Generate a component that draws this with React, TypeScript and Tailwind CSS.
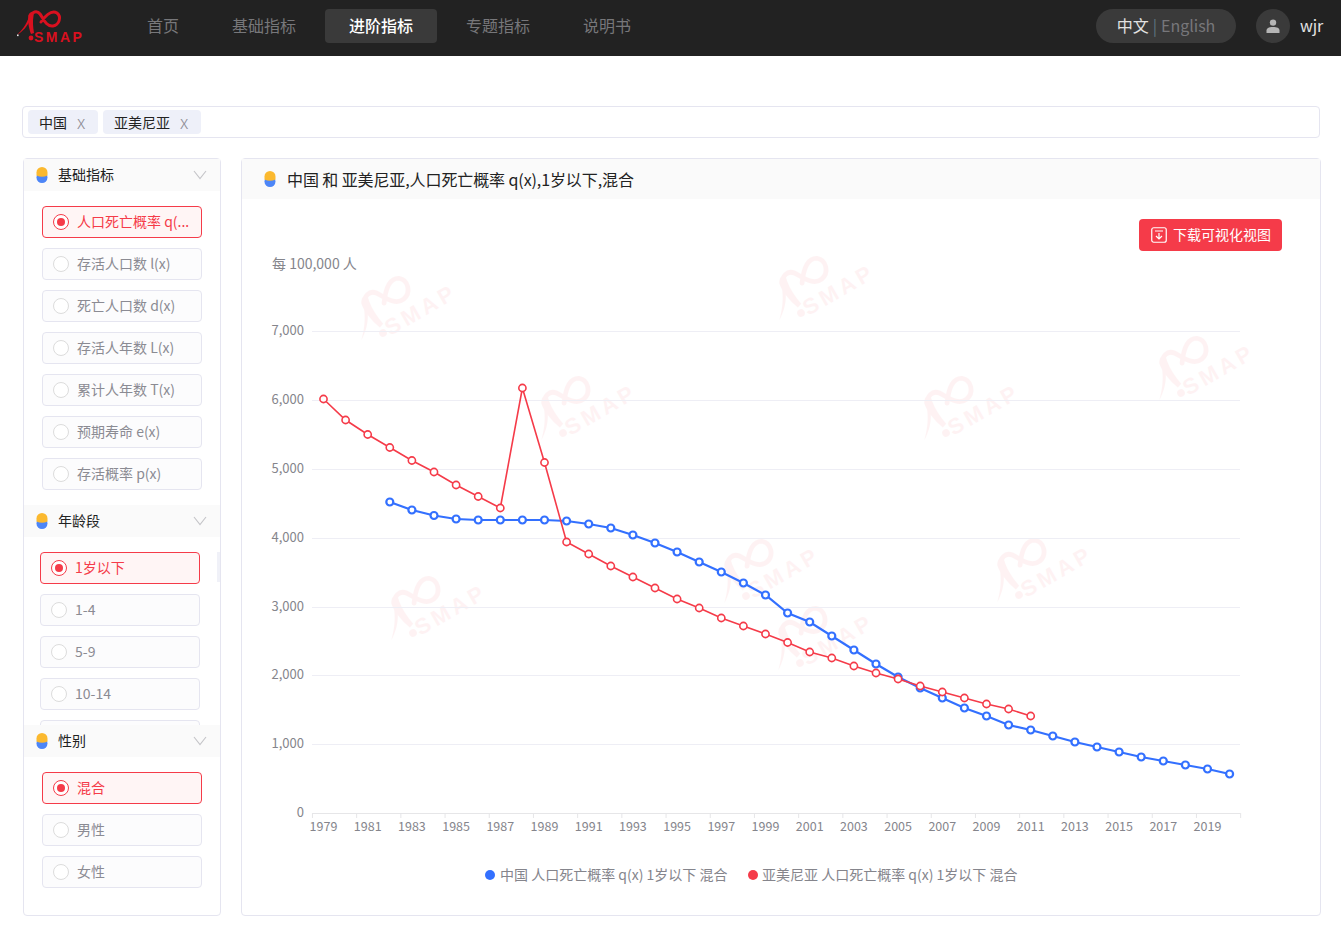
import { Fragment } from 'react';

const RED = '#f53b49';
const BLUE = '#3370ff';

const navItems = ['首页', '基础指标', '进阶指标', '专题指标', '说明书'];

const yTicks = [
    { label: '7,000', y: 331 },
    { label: '6,000', y: 400 },
    { label: '5,000', y: 469 },
    { label: '4,000', y: 538 },
    { label: '3,000', y: 607 },
    { label: '2,000', y: 675 },
    { label: '1,000', y: 744 },
    { label: '0', y: 813 },
];

// pixel heights read off the picture, one per year
const redStart = 1979;
const redSeries = [
    399, 420, 434.5, 447.5, 460.5, 472, 485, 496.5, 508, 388, 462.5, 542, 554, 566, 577, 588, 599, 608, 618, 626, 634,
    642.5, 652, 658, 666, 673, 679, 686, 692, 698, 704, 709, 716,
];
const blueStart = 1982;
const blueSeries = [
    502, 510, 515.5, 519, 520, 520, 520, 520, 521, 524, 528, 535, 543, 552, 562, 572, 583, 595, 613, 622, 636, 650, 664,
    677, 688, 698, 708, 716, 725, 730, 736, 742, 747, 752, 757, 761, 765, 769, 774,
];

const watermarks = [
    [383, 333],
    [563, 433],
    [801, 313],
    [946, 433],
    [1181, 393],
    [413, 633],
    [746, 596],
    [800, 663],
    [1019, 595],
];

const yearX = (year: number) => 323.5 + (year - 1979) * 22.1;

function LogoShape({ color }: { color: string }) {
    return (
        <g>
            <path d="M17 35 C22 30 26 25 29 17 L30 20 C27 27 23 31 17 35 Z" fill={color} />
            <path
                d="M30 16 C32 12 37 10 40 14 C43 18 46 27 53 26 C59 25 62 17 57 13 C52 10 46 15 41 22"
                fill="none"
                stroke={color}
                strokeWidth="3"
                strokeLinecap="round"
            />
            <path d="M28.5 15 C31 10 35 12 33.5 16 C32.5 21 33 27 34 33 L31 34 C28.5 27 27.5 20 28.5 15 Z" fill={color} />
            <circle cx="31" cy="38" r="2.4" fill={color} />
            <text
                x="34"
                y="42"
                fill={color}
                fontFamily="Liberation Sans, sans-serif"
                fontSize="14"
                fontWeight="700"
                letterSpacing="2.5"
            >
                SMAP
            </text>
        </g>
    );
}

function DotIcon() {
    return (
        <svg width="12" height="16" viewBox="0 0 12 16" className="shrink-0">
            <circle cx="6" cy="10.5" r="5.5" fill="#4d86f7" />
            <path d="M0.5 5.5 A5.5 5.5 0 0 1 11.5 5.5 L11.5 8.5 Q6 11 0.5 8.5 Z" fill="#fbb92f" />
        </svg>
    );
}

function SectionHeader({ title }: { title: string }) {
    return (
        <div className="flex h-8 items-center bg-[#fafafa] pl-3 pr-[13px]">
            <DotIcon />
            <span className="ml-[10px] flex-1 pb-[2px] text-sm text-[#222]">{title}</span>
            <svg width="14" height="10" viewBox="0 0 14 10">
                <polyline points="1,1 7,8.5 13,1" fill="none" stroke="#c4c4c8" strokeWidth="1.1" />
            </svg>
        </div>
    );
}

function RadioOption({ label, selected = false }: { label: string; selected?: boolean }) {
    return (
        <div
            className={
                selected
                    ? 'flex h-8 w-40 shrink-0 items-center rounded-sm border border-[#f53b49] bg-[#fff5f5] pl-[10px] text-sm text-[#f53b49]'
                    : 'flex h-8 w-40 shrink-0 items-center rounded-sm border border-[#e5e5f0] bg-[#fcfcfd] pl-[10px] text-sm text-[#8b8b93]'
            }
        >
            {selected ? (
                <span className="flex h-4 w-4 shrink-0 items-center justify-center rounded-full border border-[#f53b49] bg-white">
                    <span className="h-2 w-2 rounded-full bg-[#f53b49]" />
                </span>
            ) : (
                <span className="h-4 w-4 shrink-0 rounded-full border border-[#dcdcdc] bg-white" />
            )}
            <span className="ml-2 whitespace-nowrap pb-[3px]">{label}</span>
        </div>
    );
}

function Chart() {
    const ticks = [];
    for (let year = 1979; year <= 2021; year += 2) ticks.push(year);
    const labels = [];
    for (let year = 1979; year <= 2019; year += 2) labels.push(year);

    const redPoints = redSeries.map((y, i) => [yearX(redStart + i), y]);
    const bluePoints = blueSeries.map((y, i) => [yearX(blueStart + i), y]);

    return (
        <svg width="1078" height="664" viewBox="242 251 1078 664" className="block">
            {watermarks.map(([x, y]) => (
                <g key={`${x}-${y}`} transform={`translate(${x} ${y}) rotate(-30) scale(1.58) translate(-31 -38)`} opacity="0.06">
                    <LogoShape color={RED} />
                </g>
            ))}

            <text x="272" y="269" fontSize="14" fill="#85858c">
                每 100,000 人
            </text>

            {yTicks.map((tick) => (
                <Fragment key={tick.label}>
                    <line
                        x1="312"
                        x2="1240"
                        y1={tick.y + 0.5}
                        y2={tick.y + 0.5}
                        stroke={tick.label === '0' ? '#e6e6e8' : '#eeeef5'}
                    />
                    <text x="304" y={tick.y + 3.5} textAnchor="end" fontSize="13" fill="#85858c">
                        {tick.label}
                    </text>
                </Fragment>
            ))}

            {ticks.map((year) => (
                <line
                    key={year}
                    x1={yearX(year) - 11.05}
                    x2={yearX(year) - 11.05}
                    y1="813"
                    y2="818"
                    stroke="#e6e6e8"
                />
            ))}
            {labels.map((year) => (
                <text key={year} x={yearX(year)} y="831" textAnchor="middle" fontSize="12.5" fill="#85858c">
                    {year}
                </text>
            ))}

            <polyline points={bluePoints.join(' ')} fill="none" stroke={BLUE} strokeWidth="2.2" />
            {bluePoints.map(([x, y]) => (
                <circle key={x} cx={x} cy={y} r="3.5" fill="#fff" stroke={BLUE} strokeWidth="2.2" />
            ))}

            <polyline points={redPoints.join(' ')} fill="none" stroke={RED} strokeWidth="1.6" />
            {redPoints.map(([x, y]) => (
                <circle key={x} cx={x} cy={y} r="3.6" fill="#fff" stroke={RED} strokeWidth="1.6" />
            ))}

            <circle cx="490" cy="875" r="5" fill={BLUE} />
            <text x="500" y="880" fontSize="14" fill="#85858c">
                中国 人口死亡概率 q(x) 1岁以下 混合
            </text>
            <circle cx="753" cy="875" r="5" fill={RED} />
            <text x="762" y="880" fontSize="14" fill="#85858c">
                亚美尼亚 人口死亡概率 q(x) 1岁以下 混合
            </text>
        </svg>
    );
}

function Sidebar() {
    return (
        <aside className="flex h-[758px] w-[198px] shrink-0 flex-col rounded-sm border border-[#e5e5f0]">
            <SectionHeader title="基础指标" />
            <div className="flex flex-col gap-[10px] pb-[15px] pl-[18px] pt-[15px]">
                <RadioOption label="人口死亡概率 q(..." selected />
                <RadioOption label="存活人口数 l(x)" />
                <RadioOption label="死亡人口数 d(x)" />
                <RadioOption label="存活人年数 L(x)" />
                <RadioOption label="累计人年数 T(x)" />
                <RadioOption label="预期寿命 e(x)" />
                <RadioOption label="存活概率 p(x)" />
            </div>

            <SectionHeader title="年龄段" />
            <div className="relative flex h-[188px] flex-col gap-[10px] overflow-hidden pl-4 pt-[15px]">
                <RadioOption label="1岁以下" selected />
                <RadioOption label="1-4" />
                <RadioOption label="5-9" />
                <RadioOption label="10-14" />
                <RadioOption label="" />
                <div className="absolute right-0 top-[15px] h-[30px] w-[3px] bg-[#f0f1f8]" />
            </div>

            <SectionHeader title="性别" />
            <div className="flex flex-col gap-[10px] pl-[18px] pt-[15px]">
                <RadioOption label="混合" selected />
                <RadioOption label="男性" />
                <RadioOption label="女性" />
            </div>
        </aside>
    );
}

export default function App() {
    return (
        <div className="min-h-[946px] bg-white font-['Noto_Sans_CJK_SC',sans-serif]">
            <header className="flex h-14 items-start bg-[#222222] pt-[9px]">
                <svg width="110" height="56" viewBox="0 0 110 56" className="-mt-[9px] shrink-0">
                    <LogoShape color="#d9101f" />
                    <rect x="17" y="34.5" width="1.6" height="1.6" fill="#e8e8e8" />
                </svg>
                <nav className="ml-[13px] flex gap-[5px]">
                    {navItems.map((item) => (
                        <span
                            key={item}
                            className={
                                item === '进阶指标'
                                    ? 'flex h-[34px] items-center rounded bg-[#3a3a3a] px-6 pb-[2px] text-base font-medium text-white'
                                    : 'flex h-[34px] items-center px-6 pb-[2px] text-base text-[#77777a]'
                            }
                        >
                            {item}
                        </span>
                    ))}
                </nav>
                <div className="ml-auto flex h-[34px] w-[140px] items-center justify-center rounded-full bg-[#3a3a3a] pb-[2px] text-base">
                    <span className="text-[#e2e2e2]">中文</span>
                    <span className="mx-1 text-[#5f7480]">|</span>
                    <span className="text-[#77777a]">English</span>
                </div>
                <div className="ml-5 flex h-[34px] w-[34px] items-center justify-center rounded-full bg-[#3a3a3a]">
                    <svg width="14" height="14" viewBox="0 0 14 14">
                        <circle cx="7" cy="3.6" r="3.2" fill="#b5b5b5" />
                        <path d="M0.5 14 V11.5 C0.5 9 3 8 7 8 C11 8 13.5 9 13.5 11.5 V14 Z" fill="#b5b5b5" />
                    </svg>
                </div>
                <span className="ml-[10px] mr-5 flex h-[34px] w-[21px] items-center pb-[2px] text-base text-[#e2e2e2]">wjr</span>
            </header>

            <main className="pl-[22px]">
                <div className="mt-[50px] flex h-8 w-[1298px] items-center gap-[5px] rounded-sm border border-[#e5e5f0] pl-[5px]">
                    <span className="flex h-6 w-[70px] items-center rounded-sm bg-[#eef0f9] pl-[11px] text-sm text-[#222]">
                        中国
                        <span className="ml-[10px] pb-[2px] text-lg font-light text-[#8e8e96]">x</span>
                    </span>
                    <span className="flex h-6 w-[98px] items-center rounded-sm bg-[#eef0f9] pl-[11px] text-sm text-[#222]">
                        亚美尼亚
                        <span className="ml-[10px] pb-[2px] text-lg font-light text-[#8e8e96]">x</span>
                    </span>
                </div>

                <div className="ml-px mt-5 flex gap-5">
                    <Sidebar />
                    <section className="h-[758px] w-[1080px] rounded-sm border border-[#e5e5f0]">
                        <div className="flex h-10 items-center bg-[#fafafa] pl-[22px]">
                            <DotIcon />
                            <h1 className="ml-[11px] text-base tracking-[-0.1px] text-[#222]">中国 和 亚美尼亚,人口死亡概率 q(x),1岁以下,混合</h1>
                        </div>
                        <div className="flex justify-end pr-[38px] pt-5">
                            <button className="flex h-8 w-[143px] items-center rounded-sm bg-[#f53b49] pl-3 text-sm text-white">
                                <svg width="16" height="16" viewBox="0 0 16 16" className="shrink-0">
                                    <rect x="0.75" y="0.75" width="14.5" height="14.5" rx="2" fill="none" stroke="#fff" strokeWidth="1.2" />
                                    <path d="M4 4 H12 M8 6 V11.5 M5 9 L8 12 L11 9" fill="none" stroke="#fff" strokeWidth="1.2" />
                                </svg>
                                <span className="ml-[6px] pb-[2px]">下载可视化视图</span>
                            </button>
                        </div>
                        <Chart />
                    </section>
                </div>
            </main>
        </div>
    );
}
